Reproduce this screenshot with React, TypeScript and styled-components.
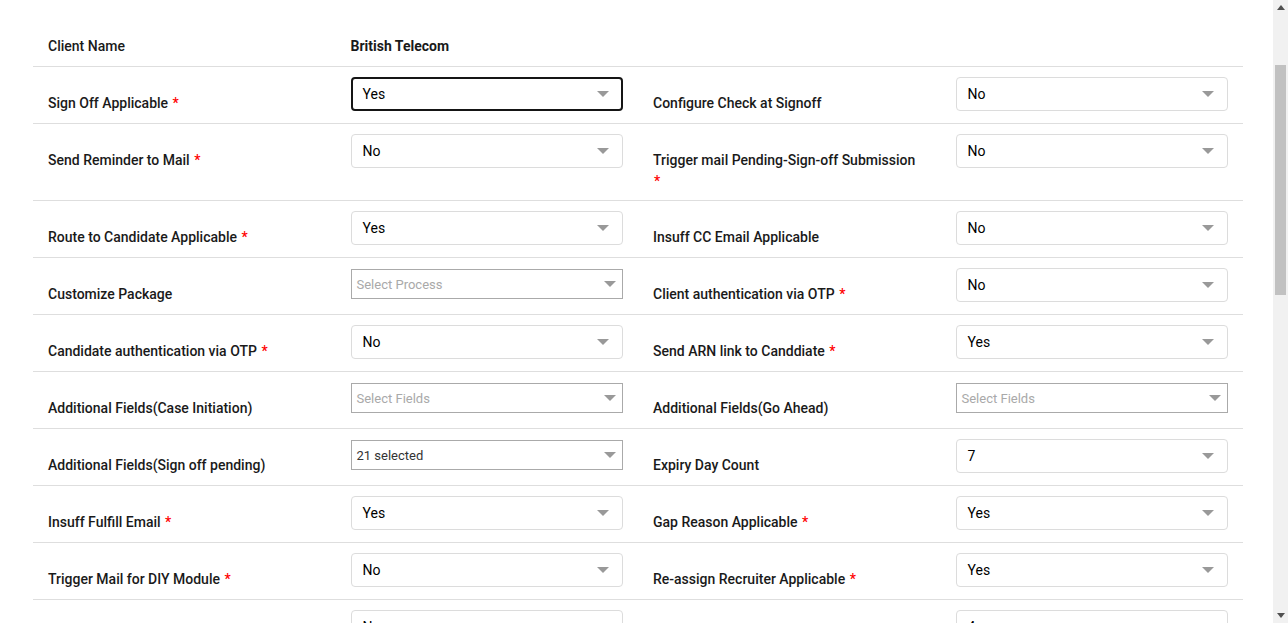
import React from 'react';
import styled, { createGlobalStyle } from 'styled-components';

type Field =
  | { kind: 'select'; value: string; focused?: boolean }
  | { kind: 'multi'; value: string; placeholder?: boolean };

interface RowData {
  left: { label: string; required?: boolean; field: Field };
  right: { label: string; required?: boolean; field: Field };
}

const rows: RowData[] = [
  {
    left: { label: 'Sign Off Applicable', required: true, field: { kind: 'select', value: 'Yes', focused: true } },
    right: { label: 'Configure Check at Signoff', field: { kind: 'select', value: 'No' } },
  },
  {
    left: { label: 'Send Reminder to Mail', required: true, field: { kind: 'select', value: 'No' } },
    right: { label: 'Trigger mail Pending-Sign-off Submission', required: true, field: { kind: 'select', value: 'No' } },
  },
  {
    left: { label: 'Route to Candidate Applicable', required: true, field: { kind: 'select', value: 'Yes' } },
    right: { label: 'Insuff CC Email Applicable', field: { kind: 'select', value: 'No' } },
  },
  {
    left: { label: 'Customize Package', field: { kind: 'multi', value: 'Select Process', placeholder: true } },
    right: { label: 'Client authentication via OTP', required: true, field: { kind: 'select', value: 'No' } },
  },
  {
    left: { label: 'Candidate authentication via OTP', required: true, field: { kind: 'select', value: 'No' } },
    right: { label: 'Send ARN link to Canddiate', required: true, field: { kind: 'select', value: 'Yes' } },
  },
  {
    left: { label: 'Additional Fields(Case Initiation)', field: { kind: 'multi', value: 'Select Fields', placeholder: true } },
    right: { label: 'Additional Fields(Go Ahead)', field: { kind: 'multi', value: 'Select Fields', placeholder: true } },
  },
  {
    left: { label: 'Additional Fields(Sign off pending)', field: { kind: 'multi', value: '21 selected' } },
    right: { label: 'Expiry Day Count', field: { kind: 'select', value: '7' } },
  },
  {
    left: { label: 'Insuff Fulfill Email', required: true, field: { kind: 'select', value: 'Yes' } },
    right: { label: 'Gap Reason Applicable', required: true, field: { kind: 'select', value: 'Yes' } },
  },
  {
    left: { label: 'Trigger Mail for DIY Module', required: true, field: { kind: 'select', value: 'No' } },
    right: { label: 'Re-assign Recruiter Applicable', required: true, field: { kind: 'select', value: 'Yes' } },
  },
  {
    left: { label: 'Reminder Mail to Recruiter', required: true, field: { kind: 'select', value: 'No' } },
    right: { label: 'Reminder Frequency (Days)', field: { kind: 'select', value: '4' } },
  },
  {
    left: { label: 'Document Upload Mandatory', field: { kind: 'select', value: 'No' } },
    right: { label: 'Consent Form Applicable', required: true, field: { kind: 'select', value: 'Yes' } },
  },
];

function Caret() {
  return (
    <CaretSvg width="12" height="6" viewBox="0 0 12 6">
      <path d="M0 0 L12 0 L6 6 Z" fill="#999" />
    </CaretSvg>
  );
}

function FieldControl({ field }: { field: Field }) {
  if (field.kind === 'multi') {
    return (
      <MultiBox>
        <MultiText $placeholder={!!field.placeholder}>{field.value}</MultiText>
        <Caret />
      </MultiBox>
    );
  }
  return (
    <SelectBox $focused={!!field.focused}>
      <SelectText>{field.value}</SelectText>
      <Caret />
    </SelectBox>
  );
}

function Scrollbar() {
  return (
    <Track>
      <ScrollArrow>
        <svg width="8" height="5" viewBox="0 0 8 5">
          <path d="M0 5 L8 5 L4 0 Z" fill="#505050" />
        </svg>
      </ScrollArrow>
      <Thumb />
      <ScrollArrow>
        <svg width="8" height="5" viewBox="0 0 8 5">
          <path d="M0 0 L8 0 L4 5 Z" fill="#505050" />
        </svg>
      </ScrollArrow>
    </Track>
  );
}

function App() {
  return (
    <>
      <GlobalStyle />
      <Viewport>
        <Page>
          <Table>
            <HeaderRow>
              <HeaderLabel>Client Name</HeaderLabel>
              <ClientValue>British Telecom</ClientValue>
            </HeaderRow>
            {rows.map((row, i) => (
              <Row key={i}>
                <LabelCell>
                  {row.left.label}
                  {row.left.required && <> <Required>*</Required></>}
                </LabelCell>
                <FieldCell>
                  <FieldControl field={row.left.field} />
                </FieldCell>
                <LabelCell>
                  {row.right.label}
                  {row.right.required && <> <Required>*</Required></>}
                </LabelCell>
                <FieldCell>
                  <FieldControl field={row.right.field} />
                </FieldCell>
              </Row>
            ))}
          </Table>
        </Page>
        <Scrollbar />
      </Viewport>
    </>
  );
}

export default App;

const GlobalStyle = createGlobalStyle`
  html, body {
    margin: 0;
    height: 100%;
    overflow: hidden;
  }
  body {
    background: #fff;
    font-family: Roboto, "Liberation Sans", Arial, sans-serif;
    color: #212121;
  }
`;

const Viewport = styled.div`
  display: flex;
  height: 100vh;
`;

const Page = styled.main`
  flex: 1;
  min-width: 0;
  overflow: hidden;
  padding: 26px 30px 0 33px;
`;

const Track = styled.div`
  flex: none;
  width: 15px;
  background: #f1f1f1;
  display: flex;
  flex-direction: column;
  align-items: center;
`;

const ScrollArrow = styled.div`
  height: 15px;
  width: 15px;
  display: flex;
  align-items: center;
  justify-content: center;
  &:last-child {
    margin-top: auto;
  }
`;

const Thumb = styled.div`
  width: 11px;
  height: 230px;
  margin-top: 50px;
  background: #c1c1c1;
`;

const Table = styled.section`
  display: flex;
  flex-direction: column;
`;

const HeaderRow = styled.div`
  display: grid;
  grid-template-columns: repeat(4, 1fr);
  border-bottom: 1px solid #dedede;
`;

const HeaderLabel = styled.div`
  padding: 10px 15px;
  font-size: 14px;
  line-height: 20px;
  font-weight: 500;
  color: #1a1a1a;
`;

const ClientValue = styled(HeaderLabel)`
  font-weight: 700;
`;

const Row = styled.div`
  display: grid;
  grid-template-columns: repeat(4, 1fr);
  min-height: 56px;
  border-bottom: 1px solid #dedede;
`;

const LabelCell = styled.div`
  padding: 26px 20px 8px 15px;
  font-size: 14px;
  line-height: 21px;
  font-weight: 500;
  color: #1a1a1a;
`;

const Required = styled.span`
  color: #f00;
  font-size: 14px;
  font-weight: 500;
  margin-left: 1px;
`;

const FieldCell = styled.div`
  padding: 10px 15px 12px;
  display: flex;
  flex-direction: column;
`;

const SelectBox = styled.div<{ $focused: boolean }>`
  box-sizing: border-box;
  height: 34px;
  display: flex;
  align-items: center;
  justify-content: space-between;
  padding: 0 ${(p) => (p.$focused ? 12 : 13)}px 1px ${(p) => (p.$focused ? 10 : 11)}px;
  border: ${(p) => (p.$focused ? '2px solid #151515' : '1px solid #dcdcdc')};
  border-radius: 4px;
  background: #fff;
`;

const SelectText = styled.span`
  font-size: 14px;
  color: #000;
`;

const MultiBox = styled.div`
  box-sizing: border-box;
  height: 30px;
  margin-top: 1px;
  display: flex;
  align-items: center;
  justify-content: space-between;
  padding: 0 6px 0 5px;
  border: 1px solid #aaa;
  background: #fff;
`;

const MultiText = styled.span<{ $placeholder: boolean }>`
  font-size: 13px;
  color: ${(p) => (p.$placeholder ? '#a9a9a9' : '#333')};
`;

const CaretSvg = styled.svg`
  flex: none;
`;
